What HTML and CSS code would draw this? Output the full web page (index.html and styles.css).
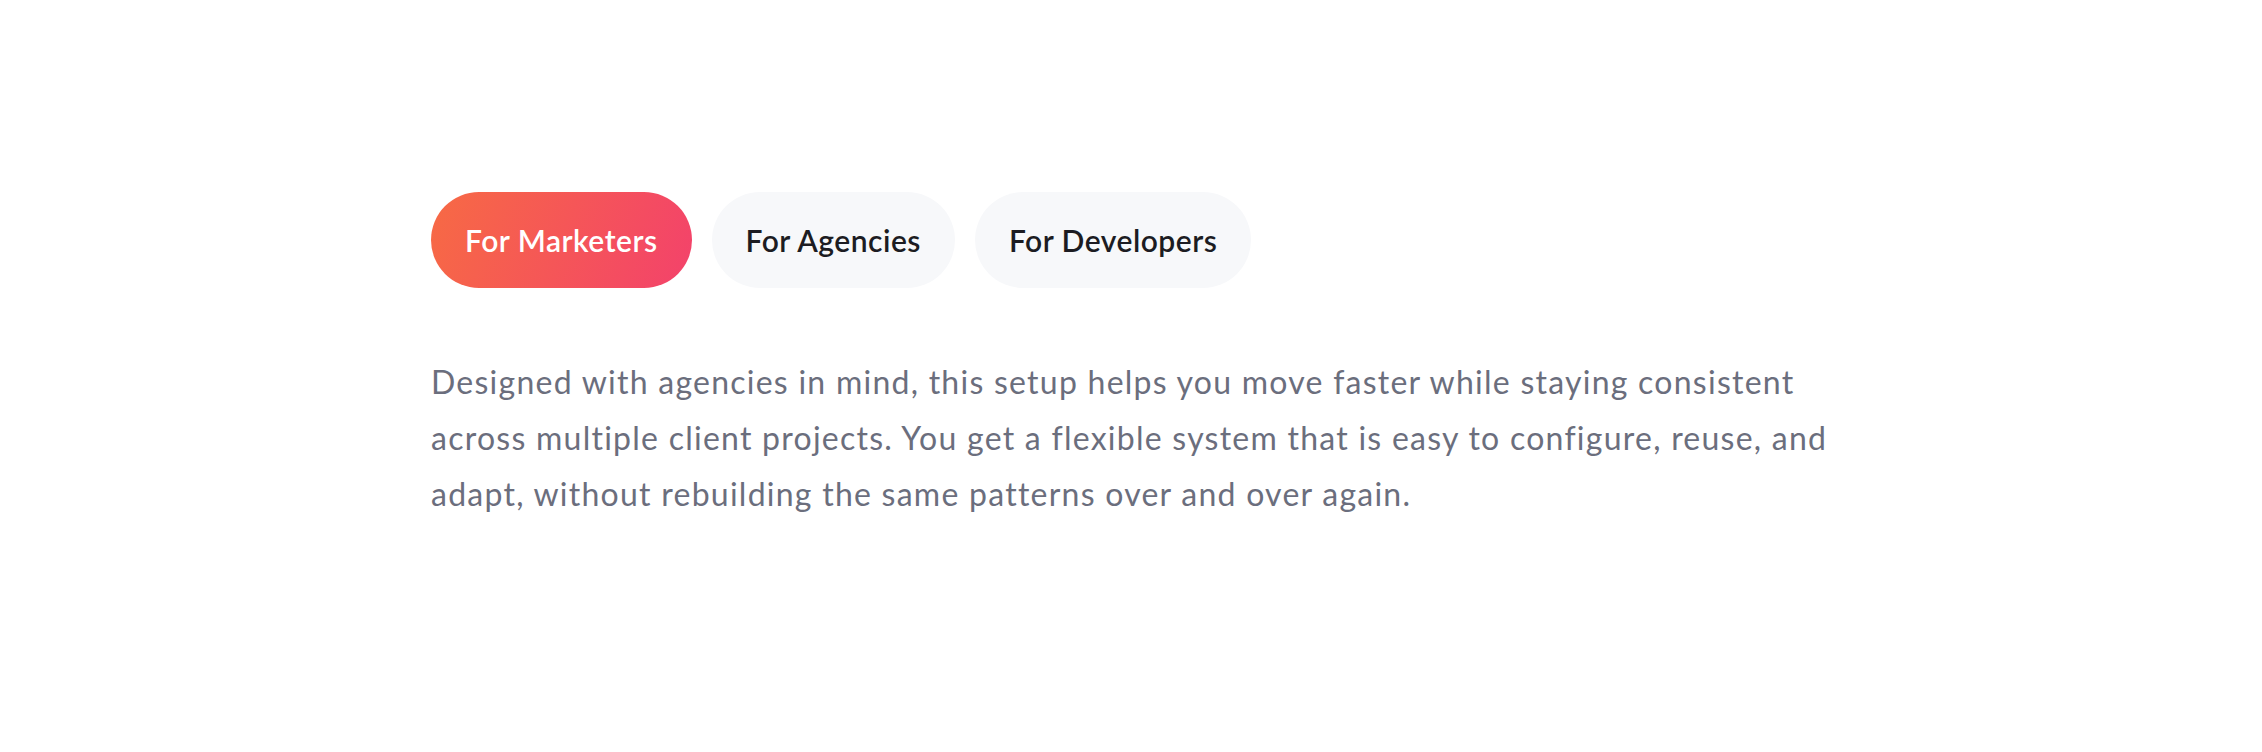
FILE: index.html
```html
<!DOCTYPE html>
<html lang="en">
<head>
<meta charset="utf-8">
<title>Audience tabs</title>
<link rel="stylesheet" href="styles.css">
</head>
<body>
<section class="audience">
  <div class="container">
    <div class="tabs" role="tablist">
      <button class="tab tab--active" role="tab">For Marketers</button>
      <button class="tab" role="tab">For Agencies</button>
      <button class="tab" role="tab">For Developers</button>
    </div>
    <p class="panel">Designed with agencies in mind, this setup helps you move faster while staying consistent<br>
    across multiple client projects. You get a flexible system that is easy to configure, reuse, and<br>
    adapt, without rebuilding the same patterns over and over again.</p>
  </div>
</section>
</body>
</html>
```

FILE: styles.css
```css
* { box-sizing: border-box; }
html, body { margin: 0; padding: 0; background: #ffffff; }
body { font-family: "Lato", "Open Sans", sans-serif; }

.audience { padding-top: 192px; }
.container { width: 1400px; margin: 0 auto; }

.tabs { display: flex; gap: 20px; }
.tab {
  font-family: inherit;
  font-size: 30px;
  font-weight: 600;
  line-height: 40px;
  letter-spacing: 0.5px;
  height: 96px;
  padding: 0 34px;
  border: none;
  border-radius: 48px;
  background: #f7f8fa;
  color: #1c1c22;
  cursor: pointer;
}
.tab--active {
  color: #ffffff;
  background: linear-gradient(110deg, #f76a44 0%, #f3426b 100%);
}

.panel {
  margin: 66px 0 0;
  font-size: 32px;
  line-height: 56px;
  letter-spacing: 1.25px;
  color: #6b6e7d;
  white-space: nowrap;
}
```
